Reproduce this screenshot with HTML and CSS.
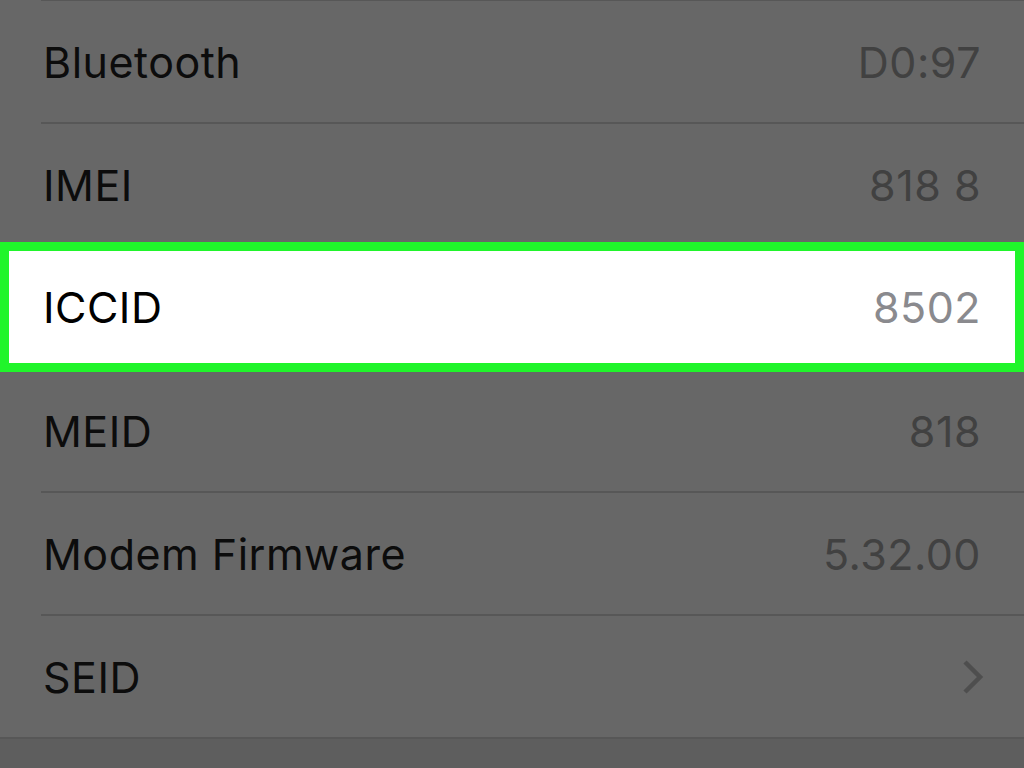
FILE: index.html
```html
<!DOCTYPE html>
<html lang="en">

<head>
    <meta charset="UTF-8" />
    <meta name="viewport" content="width=device-width, initial-scale=1.0" />
    <title>About</title>
    <link rel="stylesheet" href="styles.css">
</head>

<body>
    <div class="list">
        <div class="top-line"></div>

        <div class="row">
            <div class="row-inner">
                <span class="label">Bluetooth</span>
                <span class="value">D0:97</span>
            </div>
        </div>

        <div class="row">
            <div class="row-inner">
                <span class="label">IMEI</span>
                <span class="value">818 8</span>
            </div>
        </div>

        <div class="row active">
            <div class="row-inner">
                <span class="label">ICCID</span>
                <span class="value">8502</span>
            </div>
        </div>

        <div class="row">
            <div class="row-inner">
                <span class="label">MEID</span>
                <span class="value">818</span>
            </div>
        </div>

        <div class="row">
            <div class="row-inner">
                <span class="label">Modem Firmware</span>
                <span class="value">5.32.00</span>
            </div>
        </div>

        <div class="row last">
            <div class="row-inner">
                <span class="label">SEID</span>
                <svg class="chevron" width="22" height="34" viewBox="0 0 22 34">
                    <path d="M3 2 L18 17 L3 32" fill="none" stroke="#4e4e4e" stroke-width="4.5" />
                </svg>
            </div>
        </div>
    </div>
    <div class="footer"></div>
</body>

</html>
```

FILE: styles.css
```css
body {
    margin: 0;
    background-color: #676767;
    font-family: Inter, "Liberation Sans", Arial, sans-serif;
    overflow: hidden;
    height: 768px;
}

.list {
    background-color: #676767;
}

.top-line {
    margin-top: -1px;
    margin-left: 41px;
    height: 2px;
    background-color: #575757;
}

.row {
    padding-left: 41px;
}

.row-inner {
    display: flex;
    justify-content: space-between;
    align-items: center;
    height: 121px;
    padding-left: 2px;
    padding-right: 43px;
    border-bottom: 2px solid #575757;
}

.label {
    font-size: 43px;
    letter-spacing: 0.5px;
    color: #0c0c0c;
}

.value {
    font-size: 43px;
    letter-spacing: 0.5px;
    color: #414141;
}

.active {
    background-color: #ffffff;
    border: 9px solid #20f52b;
    padding-left: 32px;
    margin-top: -5px;
    margin-bottom: -2px;
}

.active .row-inner {
    height: 112px;
    border-bottom: 0;
    padding-right: 34px;
}

.active .label {
    color: #000000;
}

.active .value {
    color: #8a8a8e;
}

.last {
    padding-left: 0;
}

.last .row-inner {
    padding-left: 43px;
    padding-right: 40px;
}

.chevron {
    display: block;
}

.footer {
    height: 40px;
    background-color: #5e5e5e;
}
```
